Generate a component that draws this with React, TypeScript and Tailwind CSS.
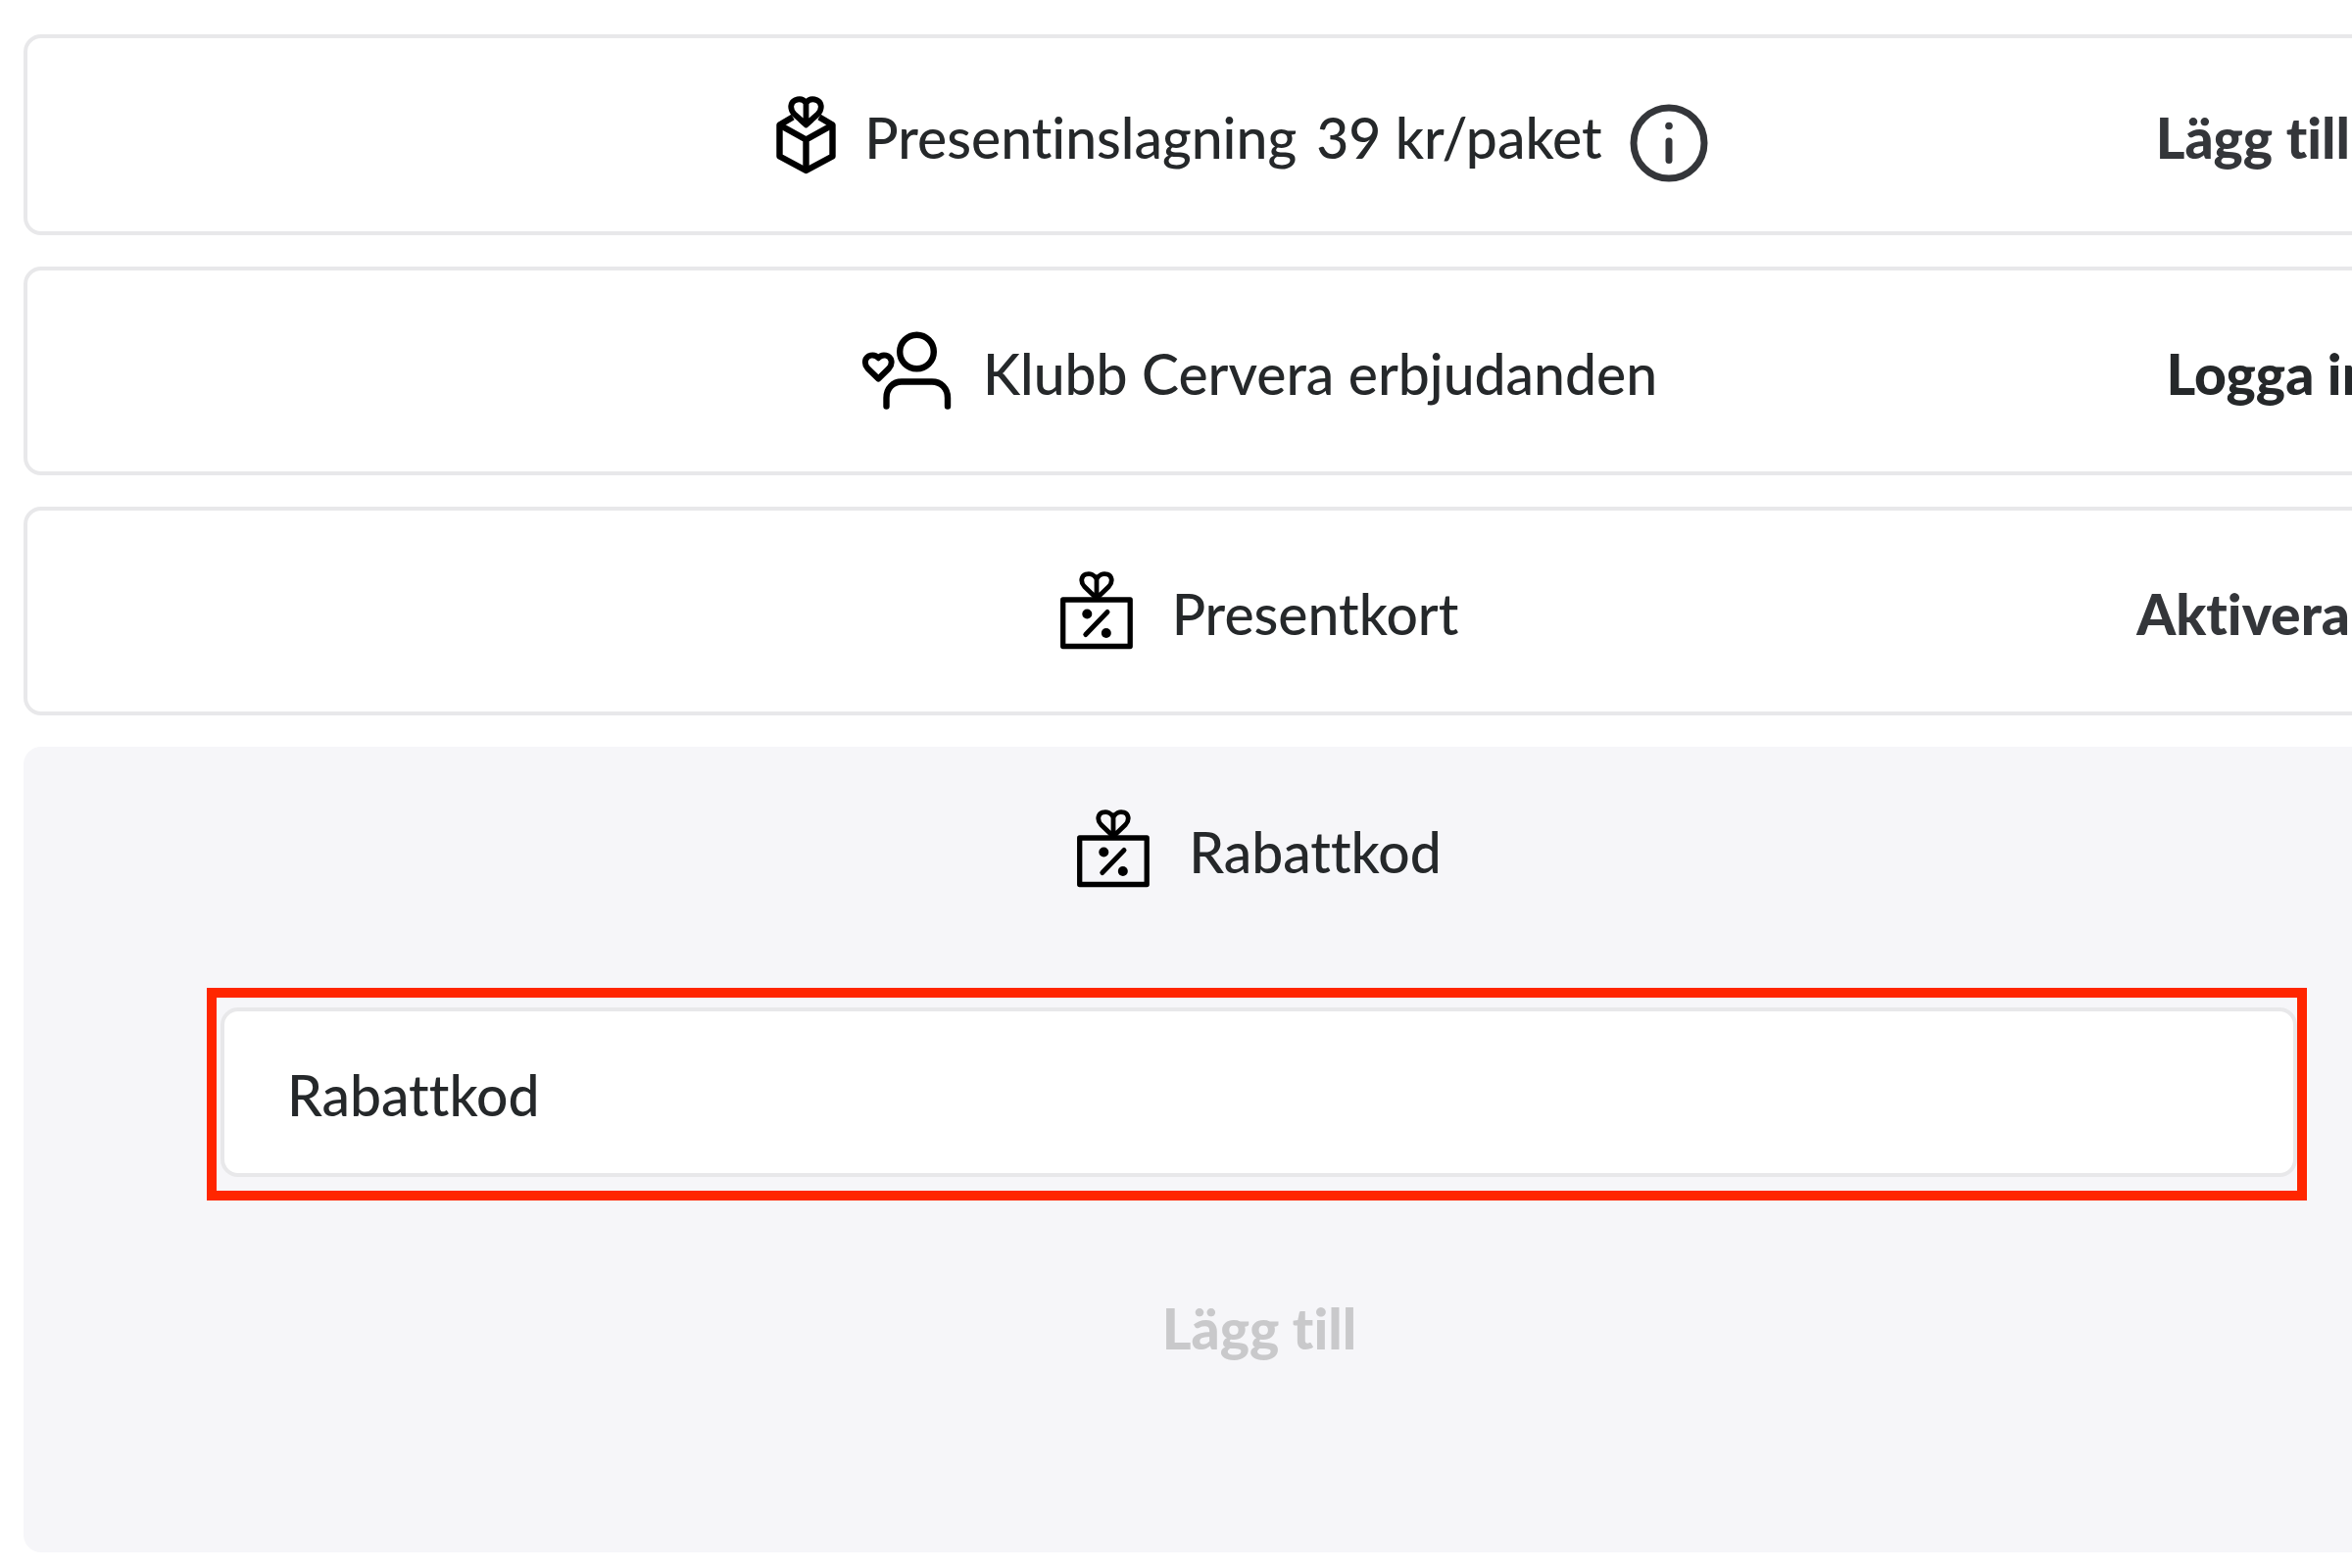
import type { ReactNode } from "react";

function GiftBoxIcon() {
  return (
    <svg aria-hidden="true" viewBox="19 17 63 81" className="h-[81px] w-[63px]" fill="none" stroke="#000" strokeWidth="6.4" strokeLinejoin="round">
      <path d="M37 39.500 23.500 47.500V79.500L50.500 94 77.500 79.500V47.500L64 39.500" />
      <path d="M23.500 47.500 50.500 62.500 77.500 47.500M50.500 62.500V94" />
      <path strokeWidth="5.800" d="M50.500 47 38.500 36.500C33.500 31 34.500 24.500 39.500 22.200 44 20.400 48 21.600 50.500 25 53 21.600 57 20.400 61.500 22.200 66.500 24.500 67.500 31 62.500 36.500ZM50.500 25V47" />
      <path strokeWidth="4" d="M44 42.500 50.500 48.500 57 42.500" />
    </svg>
  );
}

function MemberIcon() {
  return (
    <svg aria-hidden="true" viewBox="15 18 92 81" className="h-[81px] w-[92px]" fill="none" stroke="#000" strokeWidth="6.4" strokeLinecap="round" strokeLinejoin="round">
      <circle cx="71.500" cy="39" r="17.300" />
      <path d="M40.500 94.500V86C40.500 76 47.500 69.500 56 69.500H87C96 69.500 103 76 103 86V94.500" />
      <path strokeWidth="6" d="M32.300 66.500 21.500 56C17 51 18.500 44 24.500 42.600 27.500 42 30.500 43 32.300 45.200 34.100 43 37 42 40 42.600 46 44 47.500 51 43 56Z" />
    </svg>
  );
}

function GiftCardIcon() {
  return (
    <svg aria-hidden="true" viewBox="27 23 74 81" className="h-[81px] w-[74px]" fill="none" stroke="#000" strokeWidth="5.3" strokeLinecap="round" strokeLinejoin="round">
      <rect x="29.700" y="52" width="68.500" height="47.500" />
      <path strokeWidth="4.800" d="M64 50.500 51.500 38.500C47 33.500 48.500 27.500 53 26 57.500 24.700 62 26.500 64 31 66 26.500 70.500 24.700 75 26 79.500 27.500 81 33.500 76.500 38.500ZM64 31V50.500" />
      <path strokeWidth="5" d="M52.800 87.500 75 64.500" />
      <circle cx="54.300" cy="66.500" r="5" fill="#000" stroke="none" />
      <circle cx="73.800" cy="86" r="5" fill="#000" stroke="none" />
    </svg>
  );
}

function InfoIcon() {
  return (
    <svg aria-hidden="true" viewBox="0 0 80 80" className="size-20" fill="none" stroke="#34363a" strokeWidth="7">
      <circle cx="40" cy="40" r="36" />
      <path strokeLinecap="round" d="M40 38V57.500" />
      <circle cx="40" cy="22.500" r="3.800" fill="#34363a" stroke="none" />
    </svg>
  );
}

function OptionCard({ children, action, padding }: { children: ReactNode; action: ReactNode; padding: string }) {
  return (
    <section className={`grid grid-cols-[1fr_auto_1fr] items-center rounded-[18px] border-4 border-[#e8e8ea] bg-white ${padding}`}>
      <div className="col-start-2 flex items-center">{children}</div>
      <div className="flex justify-end pt-1 font-black">{action}</div>
    </section>
  );
}

export default function App() {
  return (
    <main className="overflow-hidden bg-white pt-[35px] pl-6 font-['Lato',sans-serif] text-[57px] leading-[76px] font-medium text-[#25282a] [font-variant-ligatures:none]">
      <div className="-mr-[146px] flex flex-col gap-8 pb-4">
        <OptionCard padding="py-[50px]" action={<button type="button" className="mr-36 text-[#34363a]">Lägg till</button>}>
          <div className="flex items-center pr-9">
            <GiftBoxIcon />
            <span className="ml-7 pt-1">Presentinslagning</span>
            <span className="ml-5 pt-1">39 kr/paket</span>
            <button type="button" aria-label="Information om presentinslagning" className="mt-[17px] ml-7">
              <InfoIcon />
            </button>
          </div>
        </OptionCard>

        <OptionCard padding="py-[62px]" action={<button type="button" className="mr-30">Logga in</button>}>
          <MemberIcon />
          <span className="ml-8 pt-1">Klubb Cervera erbjudanden</span>
        </OptionCard>

        <OptionCard padding="py-[62px]" action={<button type="button" className="mr-36 text-[#34363a]">Aktivera</button>}>
          <GiftCardIcon />
          <span className="ml-10 pt-1">Presentkort</span>
        </OptionCard>

        <form className="flex flex-col rounded-[18px] bg-[#f6f6f9] pt-16 pb-[191px]" onSubmit={(e) => e.preventDefault()}>
          <div className="flex items-center justify-center">
            <GiftCardIcon />
            <label htmlFor="discount" className="ml-10 pt-1">Rabattkod</label>
          </div>
          <div className="mt-[101px] mr-[192px] ml-[187px] border-10 border-[#ff2600] pt-2.5 pb-3.5 pl-1">
            <input
              id="discount"
              type="text"
              placeholder="Rabattkod"
              className="block h-[173px] w-full rounded-[18px] border-4 border-[#e8e8ea] bg-white px-16 pt-1 placeholder:text-[#25282a] placeholder:opacity-100 focus:outline-none"
            />
          </div>
          <button type="submit" disabled className="mt-[92px] self-center font-black text-[#c9c9cb]">
            Lägg till
          </button>
        </form>
      </div>
    </main>
  );
}
